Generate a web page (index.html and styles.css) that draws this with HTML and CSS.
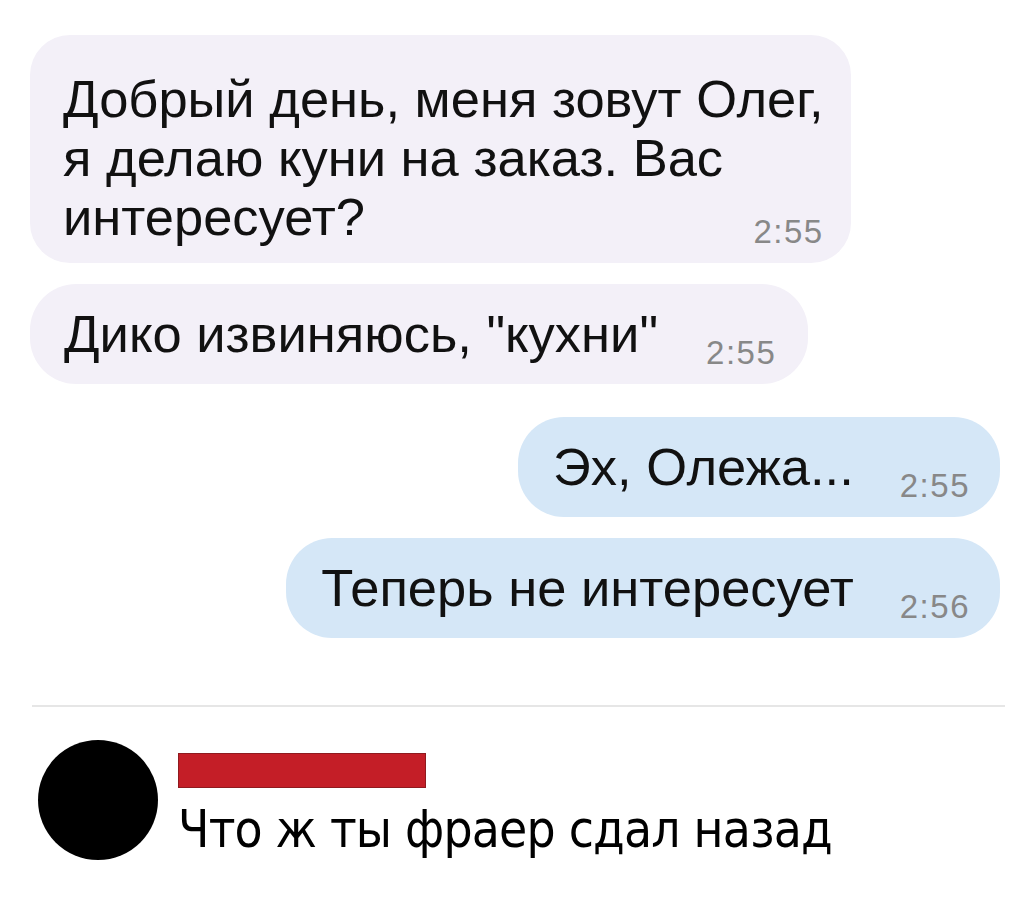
FILE: index.html
```html
<!doctype html>
<html>
  <head>
    <meta charset="utf-8">
    <link rel="stylesheet" href="styles.css">
  </head>
  <body>
    <div class="chat">
      <div class="group">
        <div class="bubble in multi">
          <div class="text">Добрый день, меня зовут Олег,<br>я делаю куни на заказ. Вас<br>интересует?</div>
          <span class="time">2:55</span>
        </div>
        <div class="bubble in">
          <div class="text">Дико извиняюсь, "кухни"</div>
          <span class="time">2:55</span>
        </div>
      </div>
      <div class="group">
        <div class="bubble out">
          <div class="text">Эх, Олежа...</div>
          <span class="time">2:55</span>
        </div>
        <div class="bubble out">
          <div class="text">Теперь не интересует</div>
          <span class="time">2:56</span>
        </div>
      </div>
    </div>

    <hr class="sep">

    <div class="comment">
      <div class="avatar"></div>
      <div class="body">
        <div class="name"></div>
        <div class="reply">Что ж ты фраер сдал назад</div>
      </div>
    </div>
  </body>
</html>
```

FILE: styles.css
```css
body {
  margin: 0;
  background: #fff;
  font-family: "Liberation Sans", Arial, sans-serif;
  color: #111;
}
.chat {
  padding: 35px 35px 0 30px;
  display: flex;
  flex-direction: column;
  gap: 33px;
}
.group {
  display: flex;
  flex-direction: column;
  gap: 21px;
}
.bubble {
  display: flex;
  align-items: flex-end;
  gap: 46px;
  padding: 20px 32px 20px 34px;
  border-radius: 46px;
  font-size: 52.5px;
  line-height: 60px;
}
.bubble.in {
  align-self: flex-start;
  background: #f3f0f8;
  gap: 48px;
}
.bubble.out {
  align-self: flex-end;
  background: #d5e7f7;
  padding-left: 35px;
  padding-right: 30px;
}
.bubble.multi {
  flex-direction: column;
  align-items: stretch;
  gap: 0;
  padding: 34px 27px 15px 33px;
  border-radius: 40px;
  line-height: 59px;
}
.time {
  font-size: 33px;
  line-height: 32px;
  letter-spacing: 1.5px;
  color: #888;
  margin-bottom: -5px;
}
.multi .time {
  align-self: flex-end;
  margin: -30px 0 0 0;
}
.sep {
  margin: 67px 30px 0 32px;
  border: 0;
  height: 2px;
  background: #e6e6e6;
}
.comment {
  display: flex;
  gap: 20px;
  padding: 33px 0 0 38px;
}
.avatar {
  width: 120px;
  height: 120px;
  border-radius: 50%;
  background: #000;
  flex-shrink: 0;
}
.name {
  margin-top: 13px;
  width: 246px;
  height: 33px;
  background: #c41e27;
  border: 1px solid #8f1a1f;
}
.reply {
  margin-top: 14px;
  font-family: "DejaVu Sans Condensed", "DejaVu Sans", sans-serif;
  font-size: 51px;
  line-height: 56px;
  letter-spacing: -0.8px;
  color: #000;
}
```
